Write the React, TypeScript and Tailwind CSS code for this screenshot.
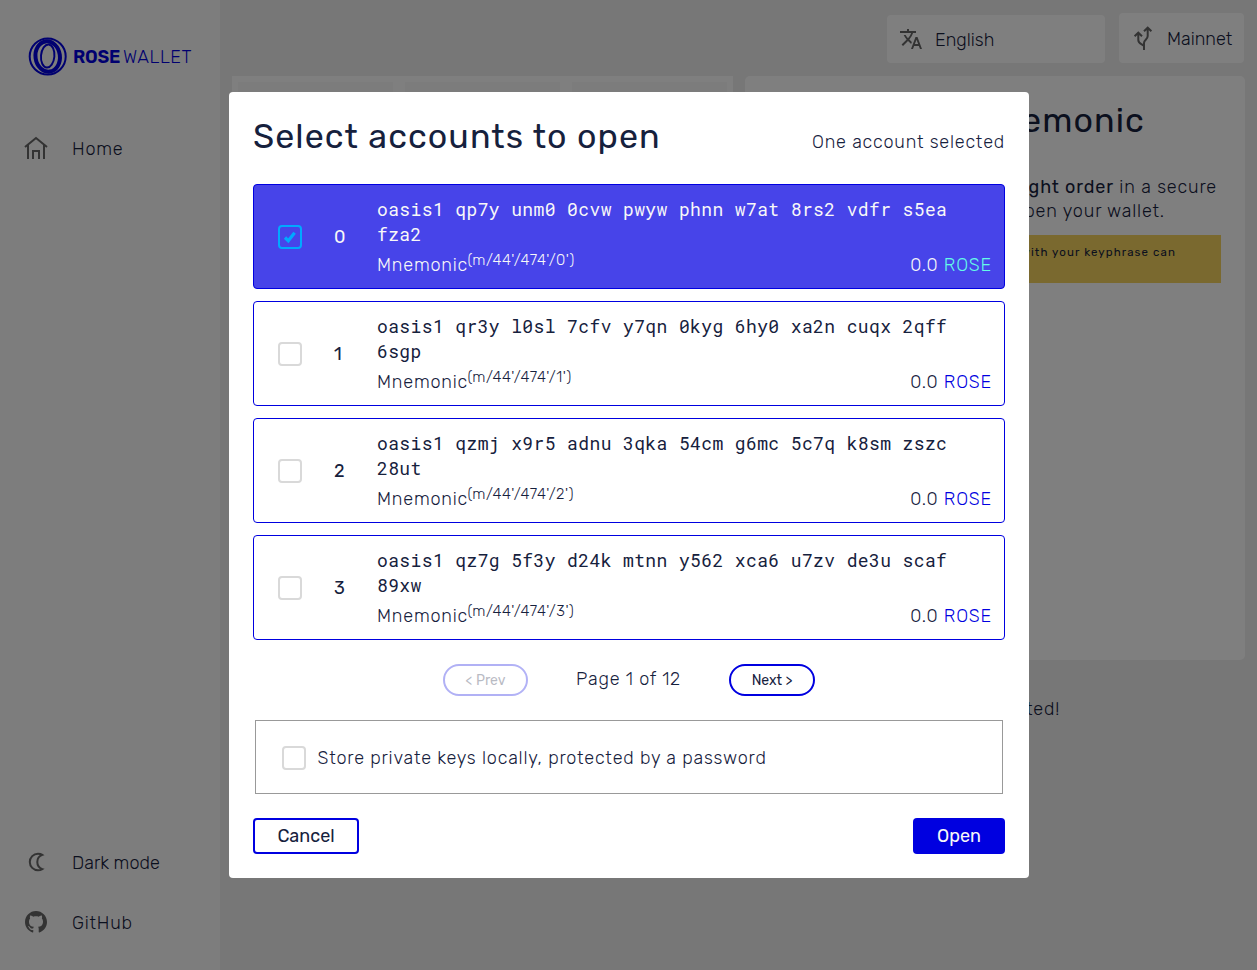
import React from 'react';
import { MdTranslate } from 'react-icons/md';
import { GrGithub } from 'react-icons/gr';

const accounts = [
  { index: 0, address: 'oasis1 qp7y unm0 0cvw pwyw phnn w7at 8rs2 vdfr s5ea fza2', selected: true },
  { index: 1, address: 'oasis1 qr3y l0sl 7cfv y7qn 0kyg 6hy0 xa2n cuqx 2qff 6sgp', selected: false },
  { index: 2, address: 'oasis1 qzmj x9r5 adnu 3qka 54cm g6mc 5c7q k8sm zszc 28ut', selected: false },
  { index: 3, address: 'oasis1 qz7g 5f3y d24k mtnn y562 xca6 u7zv de3u scaf 89xw', selected: false },
];

function Logo() {
  return (
    <div className="flex h-10 items-center pl-7 text-[#0000e0]">
      <svg width="40" height="40" viewBox="0 0 40 40" fill="none" stroke="currentColor">
        <circle cx="19.700" cy="20.500" r="18" strokeWidth="2" />
        <ellipse cx="19.700" cy="20.500" rx="12.200" ry="15.200" strokeWidth="4" transform="rotate(-8 19.700 20.500)" />
        <ellipse cx="19.700" cy="20" rx="6.700" ry="11.600" strokeWidth="1.900" transform="rotate(5 19.700 20)" />
      </svg>
      <span className="ml-[5px] w-[50px] pt-[2px] text-[18px] font-semibold whitespace-nowrap tracking-[-0.2px]">ROSE</span>
      <span className="pt-[2px] text-[18px] font-light whitespace-nowrap tracking-[0.55px]">WALLET</span>
    </div>
  );
}

function Home() {
  return (
    <svg className="text-[#666]" width="24" height="24" viewBox="0 0 24 24" fill="none" stroke="currentColor" strokeWidth="2">
      <path d="M1 11 12 2l11 9M4 9v14M20 9v14M9 23v-8h6v8" />
    </svg>
  );
}

function Moon() {
  return (
    <svg className="text-[#666]" width="24" height="24" viewBox="0 0 24 24" fill="none" stroke="currentColor" strokeWidth="2">
      <path d="M18.3 4.9C17 4 15.5 3.7 14 3.7 9.5 3.7 5.8 7.4 5.8 12s3.7 8.3 8.2 8.3c1.5 0 3-.4 4.3-1.2-3-1.1-5-3.9-5-7.1s2-6 5-7.1Z" />
    </svg>
  );
}

function Network() {
  return (
    <svg className="text-[#666]" width="24" height="24" viewBox="0 0 24 24" fill="none" stroke="currentColor" strokeWidth="2">
      <path d="M13 24v-7c0-3 3.700-3.500 3.700-7V2.500M13 5.300l3.700-3.600 3.700 3.600M13 20c-2-2.500-5.700-2-5.700-6V7.500M3.600 10.300l3.700-3.600 3.700 3.600" />
    </svg>
  );
}

function NavItem({ icon, label, spacing }: { icon: React.ReactNode; label: string; spacing: string }) {
  return (
    <div className="flex h-[60px] items-center gap-6 pl-6">
      {icon}
      <span className={`pt-[2px] text-[18px] font-light ${spacing}`}>{label}</span>
    </div>
  );
}

function CheckBox({ checked = false }: { checked?: boolean }) {
  return (
    <span className={`flex h-6 w-6 shrink-0 items-center justify-center rounded-[4px] border-2 ${checked ? 'border-[#00a9ff]' : 'border-[#d9d9d9]'}`}>
      {checked && (
        <svg width="14" height="14" viewBox="0 0 14 14" fill="none" stroke="#00a9ff" strokeWidth="3.2">
          <path d="M2 7.500 5.300 10.800 11.600 2.800" />
        </svg>
      )}
    </span>
  );
}

function AccountRow({ index, address, selected }: { index: number; address: string; selected: boolean }) {
  return (
    <div className={`flex h-[105px] rounded-[4px] border border-[#0000e0] ${selected ? 'bg-[#4744e9] text-[#f8f8f8]' : 'bg-white'}`}>
      <div className="flex w-[123px] shrink-0 items-center pl-6">
        <CheckBox checked={selected} />
        <span className="ml-8 pt-[2px] text-[18px]">{index}</span>
      </div>
      <div className="flex grow flex-col pt-3 pr-3">
        <div className="w-[590px] font-['Roboto_Mono','Liberation_Mono',monospace] text-[18px] leading-[25px] tracking-[0.38px]">{address}</div>
        <div className="flex h-8 items-center justify-between pt-1">
          <div className="flex text-[18px] leading-6 font-light">
            <span className="w-[90.500px] tracking-[0.8px]">Mnemonic</span>
            <span className="-mt-[5px] text-[15px] tracking-[0.55px]">{`(m/44'/474'/${index}')`}</span>
          </div>
          <div className="text-[18px] leading-6 font-light">
            <span className="tracking-[0.8px]">0.0 </span>
            <span className={selected ? 'tracking-[0.8px] text-[#64fbe8]' : 'tracking-[0.8px] text-[#0000e0]'}>ROSE</span>
          </div>
        </div>
      </div>
    </div>
  );
}

function Background() {
  return (
    <div className="flex h-full bg-[#eee]">
      <aside className="flex w-[220px] shrink-0 flex-col bg-[#fafafa] pt-9 pb-[18px]">
        <Logo />
        <div className="mt-[42px] grow">
          <NavItem icon={<Home />} label="Home" spacing="tracking-[0.8px]" />
        </div>
        <NavItem icon={<Moon />} label="Dark mode" spacing="tracking-[0.05px]" />
        <NavItem icon={<GrGithub className="h-6 w-6 text-[#666]" />} label="GitHub" spacing="tracking-[0.8px]" />
      </aside>
      <main className="flex grow flex-col pr-3 pl-3">
        <div className="flex h-[76px] items-start justify-end gap-[14px] pt-[13px] pr-[1px]">
          <div className="mt-[2px] flex h-12 w-[218px] items-center gap-3 rounded-[4px] bg-white pl-3">
            <MdTranslate className="h-6 w-6 text-[#666]" />
            <span className="pt-[2px] text-[18px] font-light">English</span>
          </div>
          <div className="flex h-[50px] w-[125px] items-center gap-3 rounded-[4px] bg-white pl-3">
            <Network />
            <span className="pt-[2px] text-[18px] font-light">Mainnet</span>
          </div>
        </div>
        <div className="flex h-[584px] gap-3">
          <div className="flex w-[501px] gap-3 bg-white p-[6px]">
            <div className="grow bg-[#f8f8f8]" />
            <div className="grow bg-[#f8f8f8]" />
            <div className="grow bg-[#f8f8f8]" />
          </div>
          <div className="w-[500px] rounded-[5px] bg-white pt-[25px] pr-6 pl-6">
            <h1 className="pr-[76px] text-right text-[34px] leading-10 tracking-[1.1px]">Mnemonic</h1>
            <div className="mt-[34px] pr-1 text-right text-[18px] leading-6 font-light whitespace-nowrap tracking-[0.85px]">
              <span className="font-normal">right order</span> in a secure
            </div>
            <div className="pr-[56px] text-right text-[18px] leading-6 font-light whitespace-nowrap tracking-[0.85px]">open your wallet.</div>
            <div className="mt-3 h-12 bg-[#f4d35e] pt-[9px] pr-[45px] text-right text-[11.500px] leading-4 whitespace-nowrap tracking-[1.1px]">
              with your keyphrase can
            </div>
          </div>
        </div>
        <div className="mt-[37px] w-[828px] text-right text-[18px] leading-6 font-light tracking-[0.8px]">accepted!</div>
      </main>
    </div>
  );
}

export default function App() {
  return (
    <div className="relative h-[970px] w-[1257px] overflow-hidden font-[Rubik,Roboto,sans-serif] text-[#16213d]">
      <Background />
      <div className="absolute inset-0 flex items-center justify-center bg-black/50">
        <section className="ml-px flex h-[786px] w-[800px] flex-col rounded-[4px] bg-white p-6">
          <header className="flex h-[68px] justify-between">
            <h2 className="pt-px text-[34px] leading-10 whitespace-nowrap tracking-[1.06px]">Select accounts to open</h2>
            <span className="pt-[14px] text-[18px] leading-6 font-light tracking-[0.8px]">One account selected</span>
          </header>
          <div className="flex flex-col gap-3">
            {accounts.map((account) => (
              <AccountRow key={account.index} {...account} />
            ))}
          </div>
          <div className="mt-6 flex h-8 justify-center">
            <button className="w-[85px] rounded-full border-2 border-[#0000e0] pt-px text-[14px] leading-7 opacity-30">&lt; Prev</button>
            <span className="w-[201px] text-center text-[18px] leading-[30px] font-light tracking-[0.8px]">Page 1 of 12</span>
            <button className="w-[86px] rounded-full border-2 border-[#0000e0] pt-px text-[14px] leading-7">Next &gt;</button>
          </div>
          <label className="mx-[2px] mt-6 flex h-[74px] items-center gap-[11.500px] border border-[#999] pt-[2px] pl-[26px]">
            <CheckBox />
            <span className="text-[18px] font-light tracking-[0.81px]">Store private keys locally, protected by a password</span>
          </label>
          <footer className="mt-6 flex justify-between">
            <button className="h-9 w-[106px] rounded-[4px] border-2 border-[#0000e0] text-[18px] leading-8">Cancel</button>
            <button className="h-9 w-[92px] rounded-[4px] bg-[#0000e0] text-[18px] leading-9 text-[#f8f8f8]">Open</button>
          </footer>
        </section>
      </div>
    </div>
  );
}
